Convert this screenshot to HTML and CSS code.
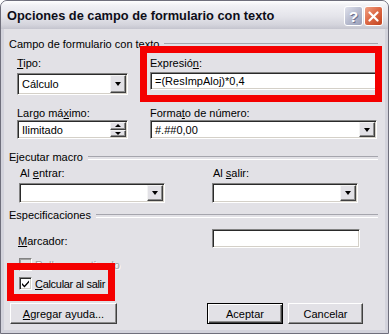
FILE: index.html
```html
<!DOCTYPE html>
<html lang="es">
<head>
<meta charset="utf-8">
<title>Opciones de campo de formulario con texto</title>
<link rel="stylesheet" href="styles.css">
</head>
<body>
<div class="window">
  <div class="titlebar">
    <span class="title">Opciones de campo de formulario con texto</span>
    <div class="tb-buttons">
      <span class="tb-btn tb-help">?</span>
      <span class="tb-btn tb-close"><svg width="11" height="11" viewBox="0 0 11 11"><path d="M1.5 1.5 L9.5 9.5 M9.5 1.5 L1.5 9.5" stroke="#fff" stroke-width="2.2" stroke-linecap="round"/></svg></span>
    </div>
  </div>
  <div class="client">
    <div class="group-title">Campo de formulario con texto</div>
    <div class="grid1">
      <div class="cell">
        <span class="lbl"><u>T</u>ipo:</span>
        <div class="field select tall"><span class="val">Cálculo</span><span class="dd"><span class="tri"></span></span></div>
      </div>
      <div class="cell expr">
        <span class="lbl">Expresió<u>n</u>:</span>
        <div class="field input expr-input"><span class="val">=(ResImpAloj)*0,4</span></div>
        <div class="annot annot-expr"></div>
      </div>
      <div class="cell">
        <span class="lbl">Largo má<u>x</u>imo:</span>
        <div class="field select row2"><span class="val">Ilimitado</span><span class="spin"><span class="spin-btn"><span class="tri up"></span></span><span class="spin-btn"><span class="tri small"></span></span></span></div>
      </div>
      <div class="cell">
        <span class="lbl">Forma<u>t</u>o de número:</span>
        <div class="field select row2"><span class="val">#.##0,00</span><span class="dd"><span class="tri"></span></span></div>
      </div>
    </div>
    <div class="group-title g2">Ejecutar macro</div>
    <div class="macro-row">
      <div class="cell">
        <span class="lbl">Al <u>e</u>ntrar:</span>
        <div class="field select macro"><span class="val"></span><span class="dd"><span class="tri"></span></span></div>
      </div>
      <div class="cell">
        <span class="lbl">Al <u>s</u>alir:</span>
        <div class="field select macro"><span class="val"></span><span class="dd"><span class="tri"></span></span></div>
      </div>
    </div>
    <div class="group-title g3">Especificaciones</div>
    <div class="marc-row">
      <span class="lbl"><u>M</u>arcador:</span>
      <div class="field input marc-input"></div>
    </div>
    <div class="check-row disabled">
      <span class="checkbox"></span>
      <span class="check-lbl">Rellenar activado</span>
    </div>
    <div class="check-row calc">
      <span class="checkbox"><svg width="9" height="9" viewBox="0 0 9 9"><path d="M1 4 L3.5 6.5 L8 1.5 L8 3.5 L3.5 8.5 L1 6 Z" fill="#000"/></svg></span>
      <span class="check-lbl calc-lbl"><u>C</u>alcular al salir</span>
      <div class="annot annot-calc"></div>
    </div>
    <div class="buttons">
      <span class="btn btn-help"><span><u>A</u>gregar ayuda...</span></span>
      <span class="btn btn-ok"><span>Aceptar</span></span>
      <span class="btn btn-cancel"><span>Cancelar</span></span>
    </div>
  </div>
</div>
</body>
</html>
```

FILE: styles.css
```css
* { box-sizing: border-box; margin: 0; padding: 0; }
html, body { width: 389px; height: 334px; overflow: hidden; }
body {
  font-family: "Liberation Sans", Arial, sans-serif;
  font-size: 11px;
  color: #000;
  background: #fff;
}
u { text-decoration: underline; text-underline-offset: 1px; }

.window {
  width: 389px;
  height: 334px;
  display: flex;
  flex-direction: column;
  border: 1px solid #6f6f7c;
  border-radius: 7px 7px 0 0;
  background: #d3d3dc;
  overflow: hidden;
}
.titlebar {
  height: 28px;
  flex: none;
  display: flex;
  align-items: center;
  padding: 0 5px 0 6px;
  background: linear-gradient(to bottom, #ffffff 0%, #f1f1f5 15%, #e4e4ea 55%, #d4d4dc 85%, #c4c4ce 100%);
}
.title {
  flex: 1;
  font-weight: bold;
  font-size: 12.8px;
  color: #0e0e18;
  margin-top: 1px;
}
.tb-buttons { display: flex; gap: 1px; margin-top: 2px; }
.tb-btn {
  width: 19px;
  height: 20px;
  border: 1px solid #fff;
  border-radius: 3px;
  display: flex;
  align-items: center;
  justify-content: center;
}
.tb-help {
  background: linear-gradient(135deg, #dfe1ec 0%, #b8bccf 50%, #9a9fb9 100%);
  color: #fff;
  font-weight: bold;
  font-size: 15px;
  text-shadow: 1px 1px 0 #6d7290;
}
.tb-close {
  background: linear-gradient(135deg, #f0a285 0%, #de6b48 45%, #c2431f 100%);
}

.client {
  flex: 1;
  margin: 0 3px 3px;
  background: #e2e1e6;
  padding: 8px 7px 0 5px;
  display: flex;
  flex-direction: column;
}

.group-title {
  display: flex;
  align-items: center;
  gap: 5px;
  height: 14px;
  line-height: 14px;
  white-space: nowrap;
}
.group-title::after {
  content: "";
  flex: 1;
  height: 2px;
  border-top: 1px solid #a5a5ad;
  border-bottom: 1px solid #fff;
  margin-top: 1px;
}
.g2 { margin-top: 11px; }
.g3 { margin-top: 5px; }

.lbl { display: block; height: 14px; line-height: 14px; white-space: nowrap; }

.grid1 {
  display: grid;
  grid-template-columns: 111px 227px;
  column-gap: 22px;
  row-gap: 11px;
  margin: 5px 0 0 8px;
}
.cell { display: flex; flex-direction: column; position: relative; }

.field {
  display: flex;
  align-items: stretch;
  background: #fff;
  border: 1px solid;
  border-color: #828282 #fff #fff #828282;
  box-shadow: inset 1px 1px 0 #2a2a2a, inset -1px -1px 0 #d4d0c8;
  padding: 1px;
}
.val { flex: 1; padding-left: 3px; display: flex; align-items: center; white-space: nowrap; overflow: hidden; }
.select.tall { margin-top: 3px; height: 22px; }
.select.row2 { margin-top: 0; height: 19px; }
.expr-input { margin-top: 2px; height: 18px; }

.dd {
  width: 16px;
  flex: none;
  background: #e2e1e6;
  border: 1px solid;
  border-color: #f4f4f4 #404040 #404040 #f4f4f4;
  box-shadow: inset -1px -1px 0 #8c8c8c;
  display: flex;
  align-items: center;
  justify-content: center;
}
.tri {
  width: 0;
  height: 0;
  border-left: 3.5px solid transparent;
  border-right: 3.5px solid transparent;
  border-top: 4px solid #000;
}
.tri.up { border-top: 0; border-bottom: 3px solid #000; border-left-width: 3px; border-right-width: 3px; }
.tri.small { border-top-width: 3px; border-left-width: 3px; border-right-width: 3px; }
.spin { width: 16px; flex: none; display: flex; flex-direction: column; }
.spin-btn {
  flex: 1;
  background: #e2e1e6;
  border: 1px solid;
  border-color: #f4f4f4 #404040 #404040 #f4f4f4;
  box-shadow: inset -1px -1px 0 #8c8c8c;
  display: flex;
  align-items: center;
  justify-content: center;
}

.annot {
  position: absolute;
  border: 7px solid #f40000;
  pointer-events: none;
  z-index: 2;
}
.annot-expr { left: -10px; top: -10px; width: 242px; height: 56px; }

.macro-row {
  display: flex;
  gap: 47px;
  margin: 2px 0 0 10px;
}
.macro-row .cell { width: 146px; }
.macro-row .lbl { padding-left: 1px; }
.select.macro { margin-top: 3px; height: 20px; }

.marc-row {
  display: flex;
  align-items: center;
  margin: 7px 0 0 9px;
}
.marc-row .lbl { width: 194px; padding-top: 2px; }
.marc-input { width: 148px; height: 19px; }

.check-row {
  display: flex;
  align-items: center;
  height: 13px;
  margin-left: 10px;
  position: relative;
}
.check-row.disabled { margin-top: 10px; color: #a0a0a0; text-shadow: 1px 1px 0 #fff; }
.check-row.calc { margin-top: 6px; }
.checkbox {
  width: 13px;
  height: 13px;
  flex: none;
  background: #fff;
  border: 1px solid;
  border-color: #828282 #fff #fff #828282;
  box-shadow: inset 1px 1px 0 #2a2a2a, inset -1px -1px 0 #d4d0c8;
  display: flex;
  align-items: center;
  justify-content: center;
}
.disabled .checkbox { background: #e2e1e6; box-shadow: inset 1px 1px 0 #a0a0a0, inset -1px -1px 0 #d4d0c8; }
.check-lbl { margin-left: 3px; white-space: nowrap; }
.calc-lbl { letter-spacing: -0.3px; }
.annot-calc { left: -12px; top: -14px; width: 108px; height: 38px; }

.buttons {
  display: flex;
  margin: 13px 0 0 1px;
}
.btn {
  height: 21px;
  display: flex;
  align-items: center;
  justify-content: center;
  background: #e2e1e6;
  border: 1px solid;
  border-color: #fff #404040 #404040 #fff;
  box-shadow: inset -1px -1px 0 #8c8c8c;
  white-space: nowrap;
}
.btn-help { width: 107px; }
.btn-ok {
  width: 76px;
  margin-left: 90px;
  border: 1px solid #000;
  box-shadow: inset 1px 1px 0 #fff, inset -1px -1px 0 #404040, inset -2px -2px 0 #8c8c8c;
}
.btn-cancel { width: 75px; margin-left: 5px; }
```
